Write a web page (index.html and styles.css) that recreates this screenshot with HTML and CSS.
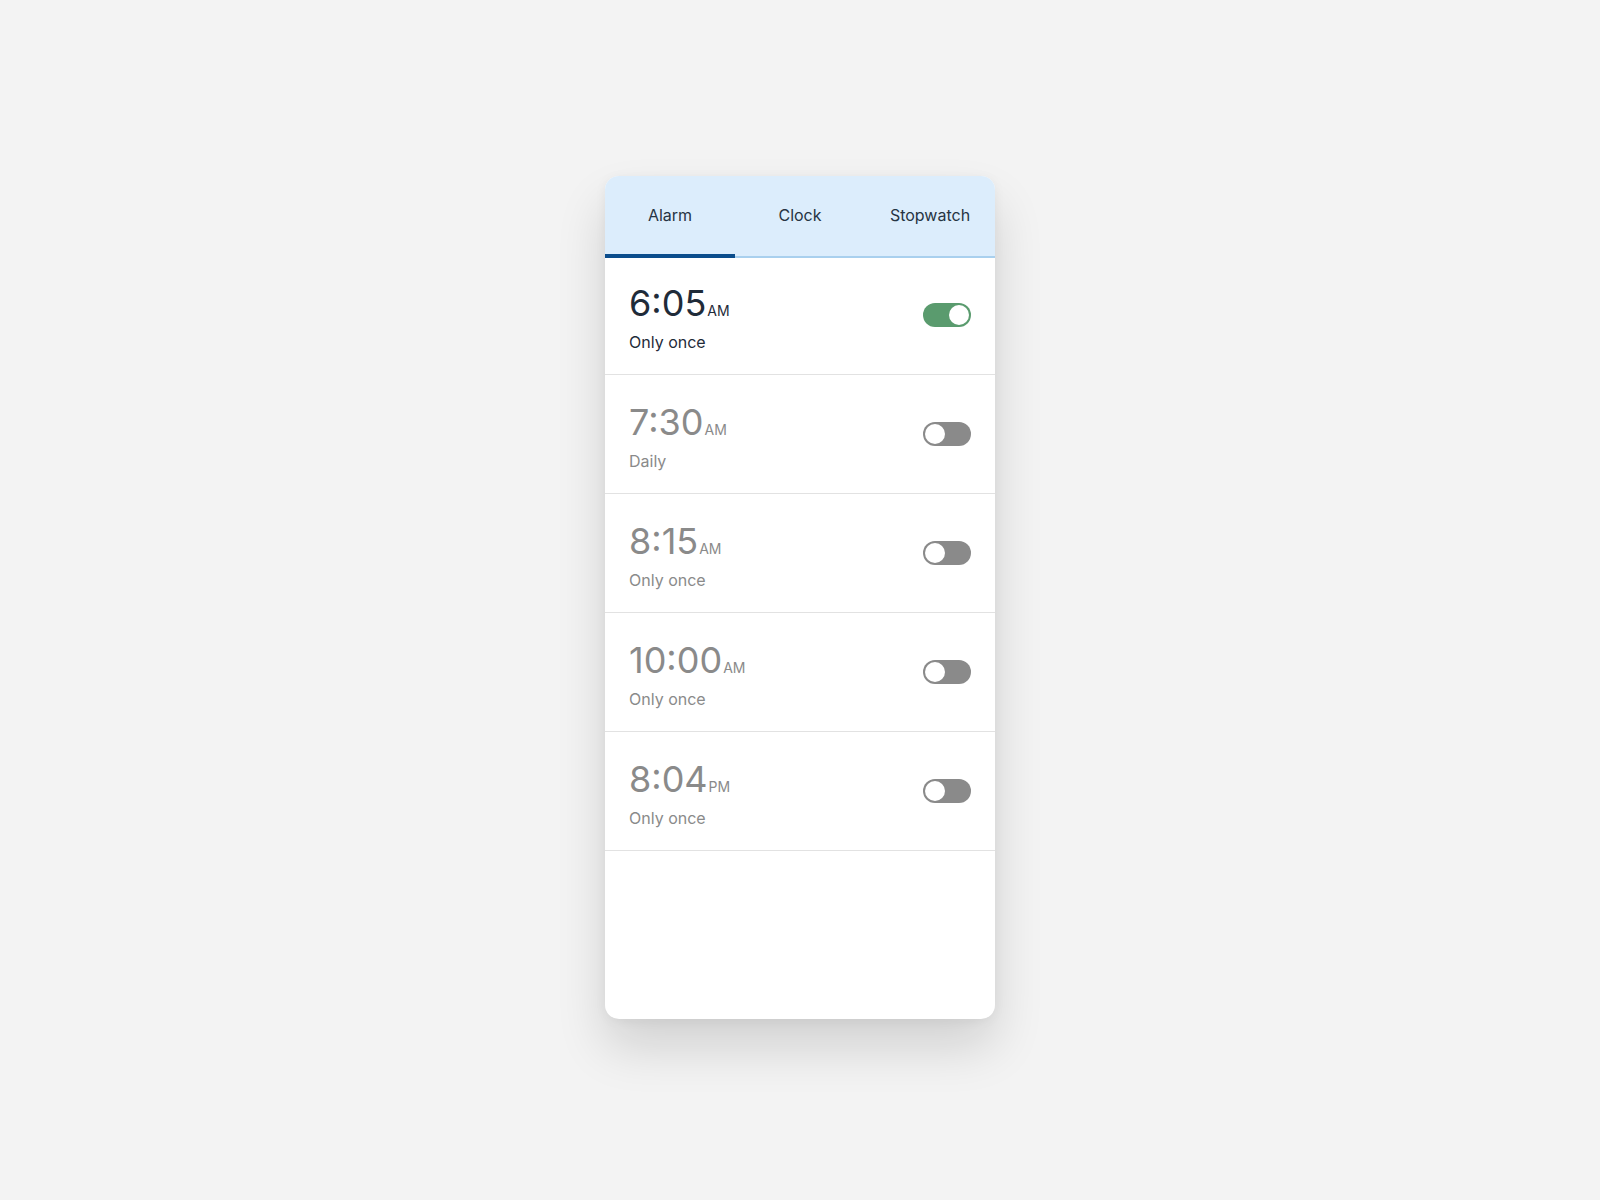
FILE: index.html
```html
<!DOCTYPE html>
<html lang="en">
<head>
<meta charset="utf-8">
<title>Alarms</title>
<link rel="stylesheet" href="styles.css">
</head>
<body>
<main class="page">
  <section class="card">
    <nav class="tabs">
      <div class="tab tab-active">Alarm</div>
      <div class="tab">Clock</div>
      <div class="tab">Stopwatch</div>
    </nav>
    <ul class="alarms">
      <li class="alarm alarm-on">
        <div class="info">
          <div class="time">6:05<span class="ampm">AM</span></div>
          <div class="repeat">Only once</div>
        </div>
        <span class="toggle toggle-on"><span class="knob"></span></span>
      </li>
      <li class="alarm">
        <div class="info">
          <div class="time">7:30<span class="ampm">AM</span></div>
          <div class="repeat">Daily</div>
        </div>
        <span class="toggle"><span class="knob"></span></span>
      </li>
      <li class="alarm">
        <div class="info">
          <div class="time">8:15<span class="ampm">AM</span></div>
          <div class="repeat">Only once</div>
        </div>
        <span class="toggle"><span class="knob"></span></span>
      </li>
      <li class="alarm">
        <div class="info">
          <div class="time">10:00<span class="ampm">AM</span></div>
          <div class="repeat">Only once</div>
        </div>
        <span class="toggle"><span class="knob"></span></span>
      </li>
      <li class="alarm">
        <div class="info">
          <div class="time">8:04<span class="ampm">PM</span></div>
          <div class="repeat">Only once</div>
        </div>
        <span class="toggle"><span class="knob"></span></span>
      </li>
    </ul>
  </section>
</main>
</body>
</html>
```

FILE: styles.css
```css
* { box-sizing: border-box; }

html, body {
  margin: 0;
  padding: 0;
  background: #f3f3f3;
  font-family: Inter, "Noto Sans", "Liberation Sans", sans-serif;
}

.page {
  min-height: 1200px;
  display: flex;
  justify-content: center;
  align-items: flex-start;
  padding-top: 176px;
}

.card {
  width: 390px;
  height: 843px;
  background: #ffffff;
  border-radius: 14px;
  overflow: hidden;
  box-shadow: 0 28px 50px rgba(0, 0, 0, 0.14), 0 2px 12px rgba(0, 0, 0, 0.05);
  display: flex;
  flex-direction: column;
}

.tabs {
  display: flex;
  height: 82px;
  margin-bottom: -2px;
  background: #dcedfc;
}

.tab {
  flex: 1;
  display: flex;
  align-items: center;
  justify-content: center;
  padding-bottom: 2px;
  font-size: 16px;
  color: #263443;
  border-bottom: 2px solid #a9d0ee;
}

.tab-active {
  border-bottom: 4px solid #0b4d8c;
  padding-bottom: 0;
}

.alarms {
  list-style: none;
  margin: 0;
  padding: 0;
}

.alarm {
  display: flex;
  align-items: center;
  justify-content: space-between;
  height: 119px;
  padding: 0 24px;
  border-bottom: 1px solid #e2e2e2;
  color: #8a8a8a;
}

.alarm-on {
  color: #1f2b39;
}

.info {
  display: flex;
  flex-direction: column;
  padding-top: 5px;
}

.time {
  font-size: 36px;
  line-height: 44px;
}

.ampm {
  font-size: 14px;
  margin-left: 1px;
}

.repeat {
  font-size: 16px;
  line-height: 24px;
  margin-top: -3px;
}

.toggle {
  width: 48px;
  height: 24px;
  border-radius: 12px;
  background: #8a8a8a;
  display: flex;
  align-items: center;
  padding: 2px;
}

.toggle-on {
  background: #5a9b6e;
  justify-content: flex-end;
}

.knob {
  width: 20px;
  height: 20px;
  border-radius: 50%;
  background: #ffffff;
}
```
